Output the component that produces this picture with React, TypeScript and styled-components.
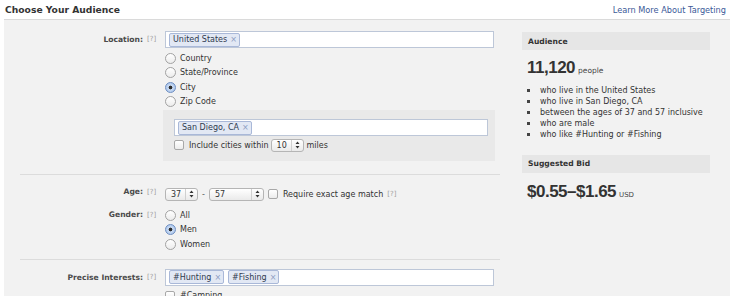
import React from "react";
import styled, { createGlobalStyle } from "styled-components";

const GlobalStyle = createGlobalStyle`
  body {
    margin: 0;
    background: #fff;
    font-family: "DejaVu Sans", "Liberation Sans", sans-serif;
    font-size: 8px;
    color: #333;
  }
`;

const Page = styled.div`
  width: 730px;
  height: 296px;
  overflow: hidden;
`;

const TopBar = styled.div`
  height: 19px;
  display: flex;
  align-items: center;
  justify-content: space-between;
  padding: 0 4px 0 5px;
`;

const Title = styled.div`
  font-size: 9.2px;
  font-weight: bold;
  color: #333;
`;

const LearnLink = styled.a`
  font-size: 8.2px;
  color: #3b5998;
  text-decoration: none;
`;

const Body = styled.div`
  margin-left: 4px;
  height: 277px;
  background: #f2f2f2;
  border-top: 1px solid #dadada;
  display: flex;
`;

const FormColumn = styled.div`
  width: 496px;
  padding-top: 11px;
`;

const Sidebar = styled.div`
  width: 188px;
  margin-left: 22px;
  padding-top: 12px;
`;

const FormRow = styled.div<{ $mt?: number }>`
  display: grid;
  grid-template-columns: 139px 22px 329px;
  margin-top: ${(p) => p.$mt ?? 0}px;
`;

const Label = styled.div<{ $lh?: number }>`
  text-align: right;
  font-weight: bold;
  font-size: 7.6px;
  color: #4a4a4a;
  line-height: ${(p) => p.$lh ?? 14.5}px;
`;

const Help = styled.span<{ $lh?: number }>`
  padding-left: 4px;
  font-size: 7px;
  color: #a0a0a0;
  line-height: ${(p) => p.$lh ?? 14.5}px;
`;

const Control = styled.div`
  display: flex;
  flex-direction: column;
`;

const TokenInput = styled.div`
  box-sizing: border-box;
  width: 100%;
  height: 17px;
  background: #fff;
  border: 1px solid #bdc7d8;
  display: flex;
  align-items: center;
  gap: 4px;
  padding-left: 3px;
`;

const Token = styled.span`
  display: inline-flex;
  align-items: center;
  height: 12px;
  padding: 0 2px 0 3px;
  background: #e2e8f4;
  border: 1px solid #a9b8d8;
  border-radius: 2px;
  color: #2f3a4f;
  font-size: 8px;
`;

const TokenX = styled.span`
  margin-left: 3px;
  color: #8c9cc2;
  font-size: 8px;
`;

const OptionRow = styled.label`
  display: flex;
  align-items: center;
  height: 14.5px;
  font-size: 8px;
  color: #333;
`;

const Radio = styled.span<{ $checked?: boolean }>`
  box-sizing: border-box;
  width: 11px;
  height: 11px;
  border-radius: 50%;
  margin-right: 4px;
  border: 1px solid ${(p) => (p.$checked ? "#6f8fc2" : "#a2a2a2")};
  background: ${(p) =>
    p.$checked
      ? "radial-gradient(circle, #2d2d2d 0 1.6px, #c8daf3 2.2px, #9fbde8 100%)"
      : "linear-gradient(#ffffff, #ececec)"};
`;

const Checkbox = styled.span<{ $ml?: number }>`
  display: inline-block;
  flex: none;
  box-sizing: border-box;
  width: 10px;
  height: 10px;
  border-radius: 2px;
  margin: 0 5px 0 ${(p) => p.$ml ?? 0}px;
  border: 1px solid #a8a8a8;
  background: linear-gradient(#ffffff, #ececec);
`;

const RadioGroup = styled.div`
  margin-top: 3px;
`;

const SubPanel = styled.div`
  margin-left: -2px;
  width: 332px;
  margin-top: 1px;
  box-sizing: border-box;
  padding: 9px 7px 9px 11px;
  background: #e9e9e9;
`;

const InlineRow = styled.div<{ $mt?: number }>`
  display: flex;
  align-items: center;
  margin-top: ${(p) => p.$mt ?? 2}px;
  height: 14px;
`;

const Separator = styled.div<{ $mt: number }>`
  margin: ${(p) => p.$mt}px 0 0 16px;
  border-top: 1px solid #dcdcdc;
`;

const SelectBox = styled.div<{ $width: number; $ml?: number }>`
  box-sizing: border-box;
  flex: none;
  width: ${(p) => p.$width}px;
  height: 13px;
  margin-left: ${(p) => p.$ml ?? 0}px;
  display: flex;
  align-items: center;
  justify-content: space-between;
  border: 1px solid #b5b5b5;
  border-radius: 3px;
  background: linear-gradient(#ffffff, #eaeaea);
  font-size: 8px;
  color: #333;
  padding-left: 5px;
`;

const SelectArrows = styled.span`
  display: flex;
  align-items: center;
  justify-content: center;
  width: 11px;
  height: 100%;
  border-left: 1px solid #d0d0d0;
`;

const Dash = styled.span`
  margin: 0 4px;
  color: #555;
`;

const Text = styled.span<{ $ml?: number }>`
  margin-left: ${(p) => p.$ml ?? 0}px;
  white-space: nowrap;
`;

const SideHeader = styled.div<{ $mt?: number }>`
  height: 18px;
  margin-top: ${(p) => p.$mt ?? 0}px;
  background: #e6e6e6;
  display: flex;
  align-items: center;
  padding-left: 6px;
  font-weight: bold;
  font-size: 7.6px;
  color: #333;
`;

const BigLine = styled.div<{ $mt: number }>`
  margin-top: ${(p) => p.$mt}px;
  line-height: 20px;
  padding-left: 5px;
  white-space: nowrap;
`;

const BigNumber = styled.span`
  font-family: "Liberation Sans", Arial, sans-serif;
  font-weight: bold;
  font-size: 17px;
  letter-spacing: -0.5px;
  color: #333;
`;

const Unit = styled.span<{ $size: number }>`
  margin-left: 3px;
  font-size: ${(p) => p.$size}px;
  color: #444;
`;

const Bullets = styled.ul`
  margin: 4px 0 0;
  padding: 0 0 0 18px;
  list-style: none;
`;

const Bullet = styled.li`
  position: relative;
  line-height: 11px;
  font-size: 8px;
  color: #333;
  white-space: nowrap;
  &::before {
    content: "";
    position: absolute;
    left: -13px;
    top: 4px;
    width: 3px;
    height: 3px;
    background: #444;
  }
`;

const Arrows = () => (
  <svg width="5" height="8" viewBox="0 0 5 8">
    <path d="M2.5 0.5 L4.5 3 L0.5 3 Z M2.5 7.5 L4.5 5 L0.5 5 Z" fill="#333" />
  </svg>
);

const Select = ({ value, width, ml }: { value: string; width: number; ml?: number }) => (
  <SelectBox $width={width} $ml={ml}>
    <span>{value}</span>
    <SelectArrows>
      <Arrows />
    </SelectArrows>
  </SelectBox>
);

const Chip = ({ children }: { children: string }) => (
  <Token>
    {children}
    <TokenX>×</TokenX>
  </Token>
);

const App = () => {
  return (
    <Page>
      <GlobalStyle />
      <TopBar>
        <Title>Choose Your Audience</Title>
        <LearnLink href="#">Learn More About Targeting</LearnLink>
      </TopBar>
      <Body>
        <FormColumn>
          <FormRow>
            <Label $lh={17}>Location:</Label>
            <Help $lh={17}>[?]</Help>
            <Control>
              <TokenInput>
                <Chip>United States</Chip>
              </TokenInput>
              <RadioGroup>
                <OptionRow>
                  <Radio />
                  Country
                </OptionRow>
                <OptionRow>
                  <Radio />
                  State/Province
                </OptionRow>
                <OptionRow>
                  <Radio $checked />
                  City
                </OptionRow>
                <OptionRow>
                  <Radio />
                  Zip Code
                </OptionRow>
              </RadioGroup>
              <SubPanel>
                <TokenInput>
                  <Chip>San Diego, CA</Chip>
                </TokenInput>
                <InlineRow>
                  <Checkbox />
                  <Text>Include cities within</Text>
                  <Select value="10" width={33} ml={2} />
                  <Text $ml={3}>miles</Text>
                </InlineRow>
              </SubPanel>
            </Control>
          </FormRow>

          <Separator $mt={13} />

          <FormRow $mt={10}>
            <Label>Age:</Label>
            <Help>[?]</Help>
            <InlineRow>
              <Select value="37" width={33} />
              <Dash>-</Dash>
              <Select value="57" width={55} />
              <Checkbox $ml={4} />
              <Text>Require exact age match</Text>
              <Help>[?]</Help>
            </InlineRow>
          </FormRow>

          <FormRow $mt={7}>
            <Label>Gender:</Label>
            <Help>[?]</Help>
            <Control>
              <OptionRow>
                <Radio />
                All
              </OptionRow>
              <OptionRow>
                <Radio $checked />
                Men
              </OptionRow>
              <OptionRow>
                <Radio />
                Women
              </OptionRow>
            </Control>
          </FormRow>

          <Separator $mt={7} />

          <FormRow $mt={9}>
            <Label $lh={17}>Precise Interests:</Label>
            <Help $lh={17}>[?]</Help>
            <Control>
              <TokenInput>
                <Chip>#Hunting</Chip>
                <Chip>#Fishing</Chip>
              </TokenInput>
              <InlineRow $mt={3}>
                <Checkbox />
                <Text>#Camping</Text>
              </InlineRow>
            </Control>
          </FormRow>
        </FormColumn>

        <Sidebar>
          <SideHeader>Audience</SideHeader>
          <BigLine $mt={8}>
            <BigNumber>11,120</BigNumber>
            <Unit $size={7.5}>people</Unit>
          </BigLine>
          <Bullets>
            <Bullet>who live in the United States</Bullet>
            <Bullet>who live in San Diego, CA</Bullet>
            <Bullet>between the ages of 37 and 57 inclusive</Bullet>
            <Bullet>who are male</Bullet>
            <Bullet>who like #Hunting or #Fishing</Bullet>
          </Bullets>
          <SideHeader $mt={14.5}>Suggested Bid</SideHeader>
          <BigLine $mt={9}>
            <BigNumber>$0.55–$1.65</BigNumber>
            <Unit $size={7}>USD</Unit>
          </BigLine>
        </Sidebar>
      </Body>
    </Page>
  );
};

export default App;
